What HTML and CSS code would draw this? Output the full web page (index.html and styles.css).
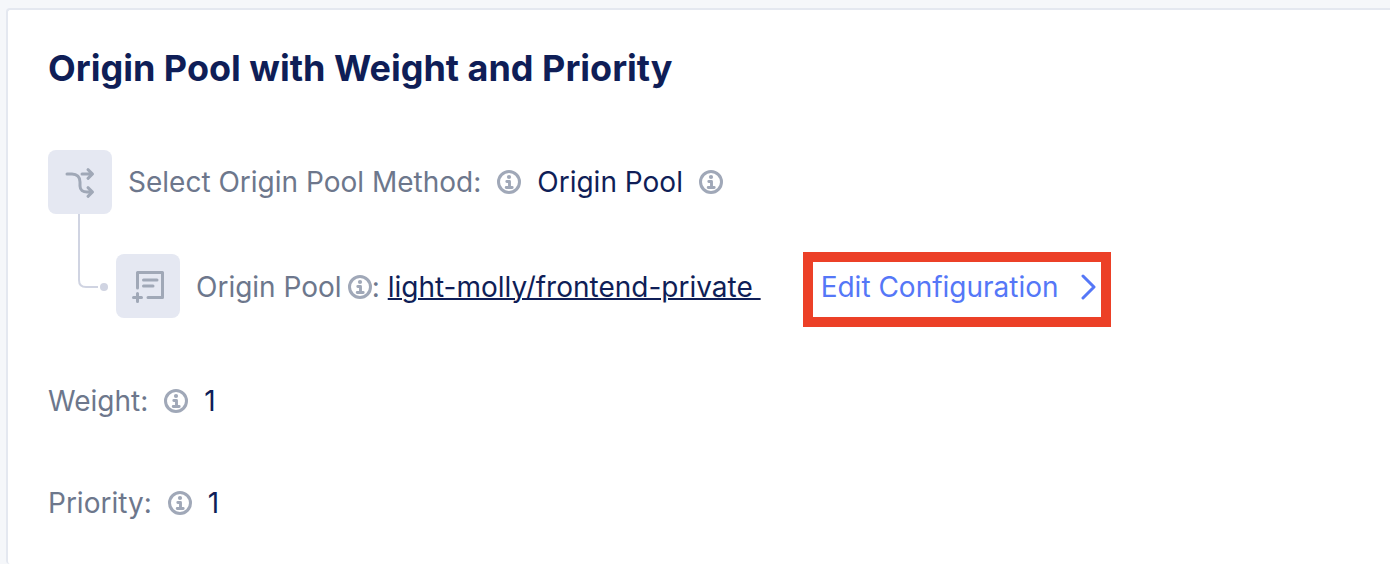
FILE: index.html
```html
<!DOCTYPE html>
<html lang="en">
<head>
<meta charset="utf-8">
<title>Origin Pool with Weight and Priority</title>
<link rel="stylesheet" href="styles.css">
</head>
<body>
<svg class="defs" aria-hidden="true">
  <symbol id="info" viewBox="0 0 24 24">
    <circle cx="12" cy="12" r="10.500" fill="none" stroke="currentColor" stroke-width="3"/>
    <circle cx="12" cy="7" r="2.100" fill="currentColor"/>
    <path d="M9.800 11.500h2.700v5.800M9.200 17.500h6" fill="none" stroke="currentColor" stroke-width="2.900" stroke-linecap="round" stroke-linejoin="round"/>
  </symbol>
</svg>
<main class="card">
  <h1 class="title">Origin Pool with Weight and Priority</h1>
  <div class="tree">
    <div class="row">
      <span class="tile"><svg class="tile-icon" viewBox="0 0 64 64" aria-hidden="true"><path d="M19 24h5c5 0 8 3 8 8v4c0 4 3 6 7 6h5M34 24h10M40 19.700l4.500 4.300-4.500 4.300M40 37.700l4.500 4.300-4.500 4.300"/></svg></span>
      <span class="label">Select Origin Pool Method:</span>
      <button class="info" aria-label="About the origin pool method"><svg><use href="#info"/></svg></button>
      <span class="value">Origin Pool</span>
      <button class="info" aria-label="About origin pool"><svg><use href="#info"/></svg></button>
    </div>
    <div class="row child">
      <svg class="branch" viewBox="0 0 32 80" aria-hidden="true"><path d="M3 0v66q0 7 7 7h12"/><circle cx="28" cy="73" r="4"/></svg>
      <span class="tile"><svg class="tile-icon" viewBox="0 0 64 64" aria-hidden="true"><path d="M21.500 34V18.500h25v25H32M27.500 26H41M27.500 32H37M17.500 43.500h8M21.500 39.500v8"/></svg></span>
      <span class="label pool">Origin Pool <button class="info" aria-label="About this origin pool"><svg><use href="#info"/></svg></button>:</span>
      <a class="pool-link" href="#">light-molly/frontend-private&nbsp;</a>
      <a class="edit" href="#">Edit Configuration <svg class="chevron" viewBox="0 0 16 26" aria-hidden="true"><path d="M2 2l11 11L2 24"/></svg></a>
    </div>
  </div>
  <div class="fields">
    <div class="field"><span class="label">Weight:</span><button class="info" aria-label="About weight"><svg><use href="#info"/></svg></button><span class="value">1</span></div>
    <div class="field"><span class="label">Priority:</span><button class="info" aria-label="About priority"><svg><use href="#info"/></svg></button><span class="value">1</span></div>
  </div>
</main>
</body>
</html>
```

FILE: styles.css
```css
* { box-sizing: border-box; }
body {
  margin: 0;
  padding: 8px 0 0 6px;
  background: #f5f7fa;
  color: #0f1e57;
  font: 28px/34px Inter, "Liberation Sans", sans-serif;
  overflow-x: hidden;
}
.defs { position: absolute; width: 0; height: 0; }
.card {
  padding: 36px 40px 44px;
  background: #fff;
  border: 2px solid #e4e8f0;
  border-right: 0;
  border-bottom: 0;
  border-radius: 4px 0 0 4px;
}
.title { margin: 0 0 60px; font-size: 36px; line-height: 44px; font-weight: 700; }
.tree { display: flex; flex-direction: column; gap: 40px; }
.row, .field { display: flex; align-items: center; gap: 16px; white-space: nowrap; }
.child { position: relative; margin-left: 68px; }
.tile { flex: none; width: 64px; height: 64px; border-radius: 8px; background: #e5e8f2; }
.tile-icon {
  display: block;
  fill: none;
  stroke: #a0a8b7;
  stroke-width: 3;
  stroke-linecap: round;
  stroke-linejoin: round;
}
.branch {
  position: absolute;
  left: -40px;
  top: -40px;
  width: 32px;
  height: 80px;
  fill: none;
  stroke: #d0d4e2;
  stroke-width: 2;
}
.branch circle { fill: #d0d4e2; stroke: none; }
.label { color: #6d778c; }
.info {
  flex: none;
  width: 24px;
  height: 24px;
  padding: 0;
  border: 0;
  background: none;
  color: #a0a8b8;
}
.info svg { display: block; width: 24px; height: 24px; overflow: visible; }
.pool, .pool-link, .edit { padding-top: 2px; }
.pool { display: flex; align-items: center; gap: 6px; }
.pool .info { margin-right: -6px; }
.pool-link { color: inherit; text-decoration-thickness: 2px; margin-left: -8px; }
.edit {
  position: relative;
  display: flex;
  align-items: center;
  gap: 22px;
  margin-left: 44px;
  color: #5577f7;
  text-decoration: none;
}
.edit::after {
  content: "";
  position: absolute;
  inset: -16px -14px -23px -18px;
  border: 10px solid #ec4027;
}
.chevron { width: 16px; height: 26px; fill: none; stroke: currentColor; stroke-width: 3; stroke-linecap: round; stroke-linejoin: round; }
.fields { display: flex; flex-direction: column; gap: 68px; margin-top: 66px; }
```
